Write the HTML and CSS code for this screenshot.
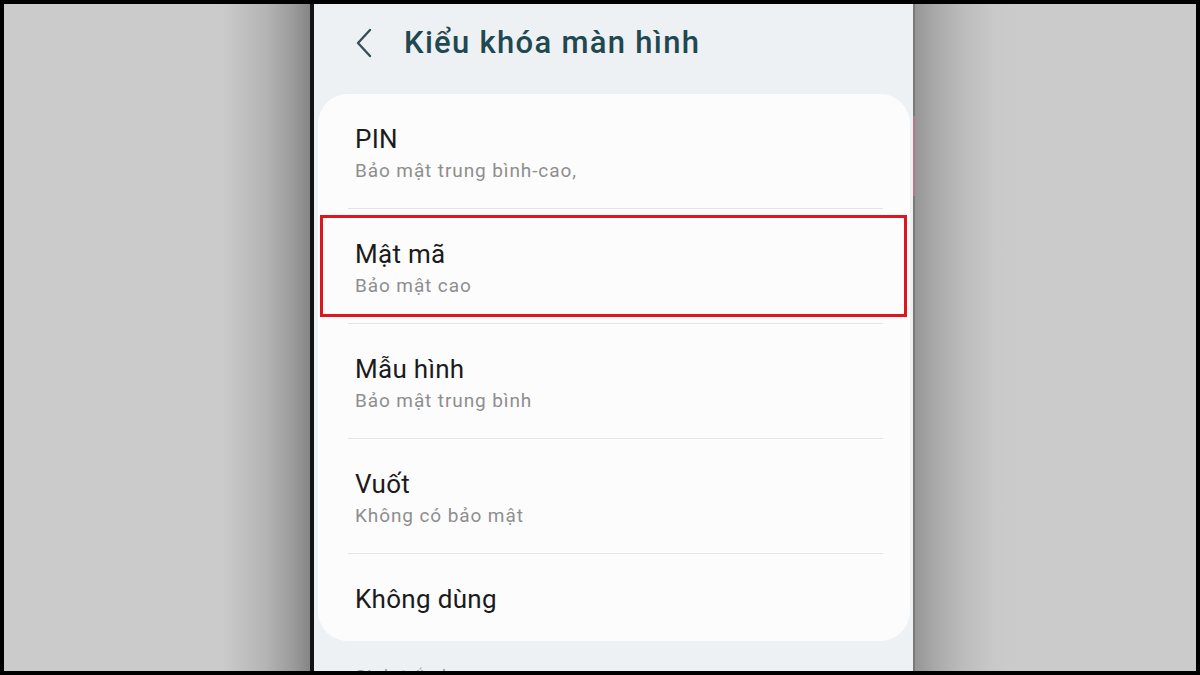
FILE: index.html
```html
<!DOCTYPE html>
<html lang="vi">
<head>
<meta charset="utf-8">
<title>Kiểu khóa màn hình</title>
<link rel="stylesheet" href="styles.css">
</head>
<body>
<div class="frame">
  <div class="side side-left"></div>
  <div class="bezel-left"></div>
  <div class="screen">
    <header class="appbar">
      <svg class="back" width="18" height="30" viewBox="0 0 18 30" aria-hidden="true">
        <path d="M15 2 L3 15 L15 28" fill="none" stroke="#345058" stroke-width="2.4" stroke-linecap="round" stroke-linejoin="round"/>
      </svg>
      <h1 class="title">Kiểu khóa màn hình</h1>
    </header>
    <div class="card">
      <div class="row">
        <div class="row-title">PIN</div>
        <div class="row-sub">Bảo mật trung bình-cao,</div>
      </div>
      <div class="row row-hl">
        <span class="mark"></span>
        <div class="row-title">Mật mã</div>
        <div class="row-sub">Bảo mật cao</div>
      </div>
      <div class="row">
        <div class="row-title">Mẫu hình</div>
        <div class="row-sub">Bảo mật trung bình</div>
      </div>
      <div class="row">
        <div class="row-title">Vuốt</div>
        <div class="row-sub">Không có bảo mật</div>
      </div>
      <div class="row row-last">
        <div class="row-title">Không dùng</div>
      </div>
    </div>
    <div class="section">Sinh trắc học</div>
  </div>
  <div class="bezel-right"><span class="pink"></span></div>
  <div class="side side-right"></div>
</div>
</body>
</html>
```

FILE: styles.css
```css
* { box-sizing: border-box; }
html, body { margin: 0; padding: 0; background: #000; }
body { font-family: Roboto, "Noto Sans", "Liberation Sans", sans-serif; }

.frame {
  width: 1200px;
  height: 675px;
  border: 4px solid #000;
  display: flex;
  overflow: hidden;
}

.side { height: 100%; }
.side-left {
  width: 306px;
  background: linear-gradient(to right, #cbcbcb 0, #cbcbcb 218px, #b4b4b4 262px, #9a9a9a 290px, #858585 306px);
}
.bezel-left { width: 4px; background: #141414; }
.bezel-right { width: 2px; background: #7a7a7a; position: relative; }
.pink {
  position: absolute;
  left: 0; top: 112px;
  width: 2px; height: 80px;
  background: #b07a86;
}
.side-right {
  flex: 1;
  background: linear-gradient(to right, #969696 0, #a9a9a9 20px, #bdbdbd 50px, #c9c9c9 80px, #cbcbcb 100px);
}

.screen {
  width: 599px;
  height: 100%;
  background: #eef1f4;
  overflow: hidden;
}

.appbar {
  height: 90px;
  display: flex;
  align-items: center;
  padding: 0 0 12px 41px;
}
.back { display: block; margin-right: 31px; }
.title {
  margin: 0;
  font-size: 31px;
  line-height: 38px;
  font-weight: 500;
  color: #1f4850;
  letter-spacing: 1.3px;
}

.card {
  margin: 0 3px 0 4px;
  background: #fcfcfd;
  border-radius: 30px;
}

.row {
  position: relative;
  margin: 0 27px 0 30px;
  padding: 30px 0 25px 7px;
  border-bottom: 1px solid #e4e4e6;
}
.row-last { border-bottom: none; padding-bottom: 27px; }

.row-title {
  font-size: 26px;
  line-height: 30px;
  color: #1b1b1b;
  letter-spacing: 0.3px;
}
.row-sub {
  margin-top: 5px;
  font-size: 19px;
  line-height: 24px;
  color: #8e8e8e;
  letter-spacing: 0.9px;
}

.mark {
  position: absolute;
  left: -28px;
  right: -24px;
  top: 6px;
  bottom: 6px;
  border: 3px solid #e1161c;
}

.section {
  margin-top: 24px;
  padding-left: 41px;
  font-size: 19px;
  line-height: 24px;
  color: #9a9ea2;
  letter-spacing: 0.8px;
}
```
